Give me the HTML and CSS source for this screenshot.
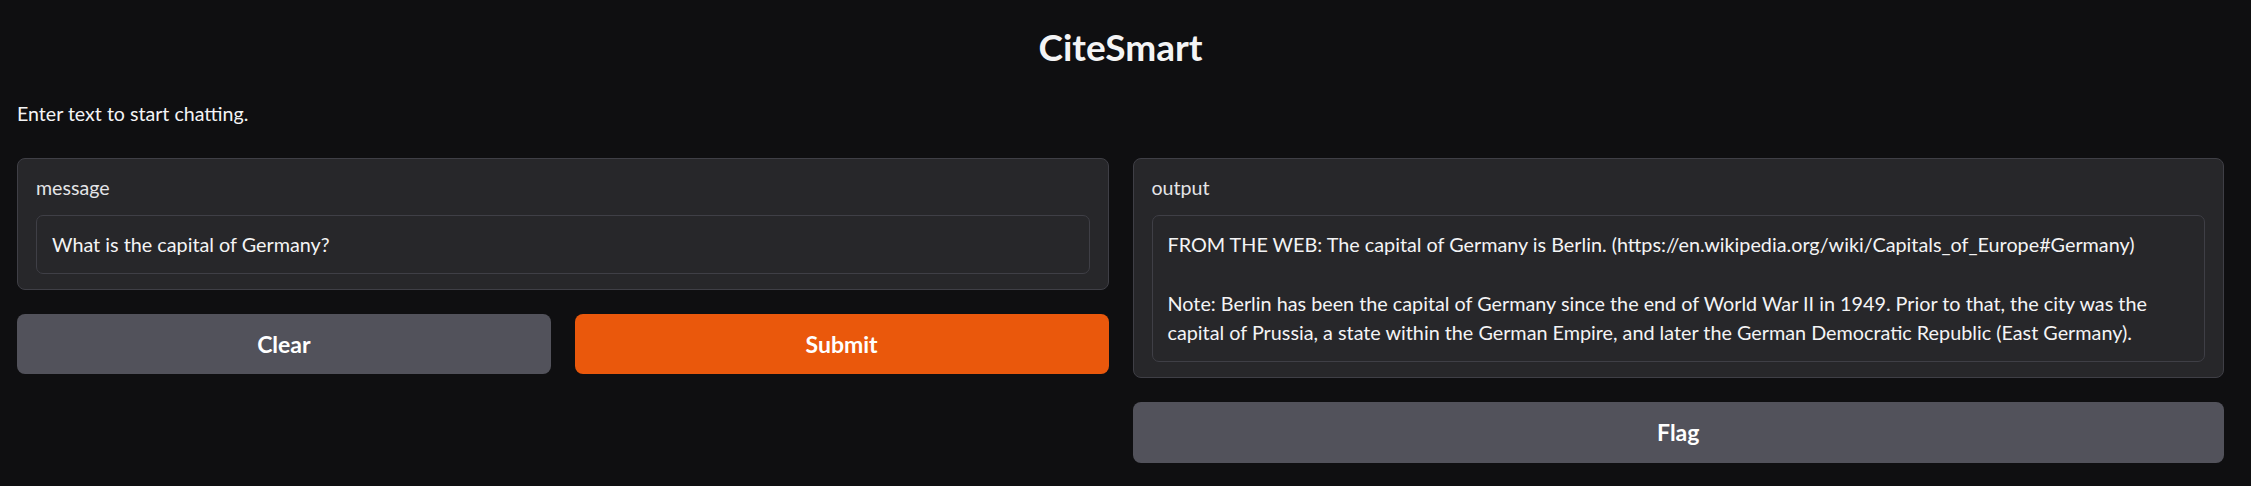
FILE: index.html
```html
<!DOCTYPE html>
<html lang="en">
<head>
<meta charset="utf-8">
<title>CiteSmart</title>
<link rel="stylesheet" href="styles.css">
</head>
<body>
<div class="app">
  <h1 class="title">CiteSmart</h1>
  <p class="description">Enter text to start chatting.</p>
  <div class="row">
    <div class="column">
      <div class="panel">
        <div class="label">message</div>
        <div class="field">What is the capital of Germany?</div>
      </div>
      <div class="buttons">
        <button class="btn secondary">Clear</button>
        <button class="btn primary">Submit</button>
      </div>
    </div>
    <div class="column">
      <div class="panel">
        <div class="label">output</div>
        <div class="field multiline">FROM THE WEB: The capital of Germany is Berlin. (https://en.wikipedia.org/wiki/Capitals_of_Europe#Germany)<br><br>Note: Berlin has been the capital of Germany since the end of World War II in 1949. Prior to that, the city was the<br>capital of Prussia, a state within the German Empire, and later the German Democratic Republic (East Germany).</div>
      </div>
      <button class="btn secondary full">Flag</button>
    </div>
  </div>
</div>
</body>
</html>
```

FILE: styles.css
```css
* { box-sizing: border-box; }

html, body {
  margin: 0;
  background: #0f0f11;
}

body {
  font-family: "Source Sans Pro", "Lato", "Noto Sans", sans-serif;
  color: #f4f4f5;
  font-size: 20px;
}

.app {
  padding: 0 27px 0 17px;
}

.title {
  margin: 0;
  padding-top: 25px;
  font-size: 37px;
  line-height: 1.2;
  font-weight: 700;
  text-align: center;
  color: #f4f4f5;
}

.description {
  margin: 31px 0 0 0;
  font-size: 19.6px;
  line-height: 28px;
  color: #f4f4f5;
}

.row {
  display: flex;
  gap: 24px;
  margin-top: 30px;
  align-items: flex-start;
}

.column {
  flex: 1 1 0;
  min-width: 0;
  display: flex;
  flex-direction: column;
  gap: 24px;
}

.panel {
  background: #27272a;
  border: 1px solid #3f3f46;
  border-radius: 8px;
  padding: 15px 18px 15px 18px;
}

.label {
  font-size: 19.6px;
  line-height: 28px;
  color: #e4e4e7;
  margin-bottom: 13px;
}

.field {
  border: 1px solid #3f3f46;
  border-radius: 7px;
  background: #27272a;
  padding: 14px 15px 13px 15px;
  font-size: 19.8px;
  line-height: 29.3px;
  color: #f4f4f5;
  white-space: nowrap;
}

.buttons {
  display: flex;
  gap: 24px;
}

.btn {
  flex: 1 1 0;
  height: 60px;
  border: none;
  border-radius: 8px;
  font-family: inherit;
  font-size: 23px;
  font-weight: 700;
  color: #ffffff;
  cursor: pointer;
}

.btn.full {
  flex: none;
  width: 100%;
  height: 61px;
}

.secondary {
  background: #52525b;
}

.primary {
  background: #ea580c;
}
```
